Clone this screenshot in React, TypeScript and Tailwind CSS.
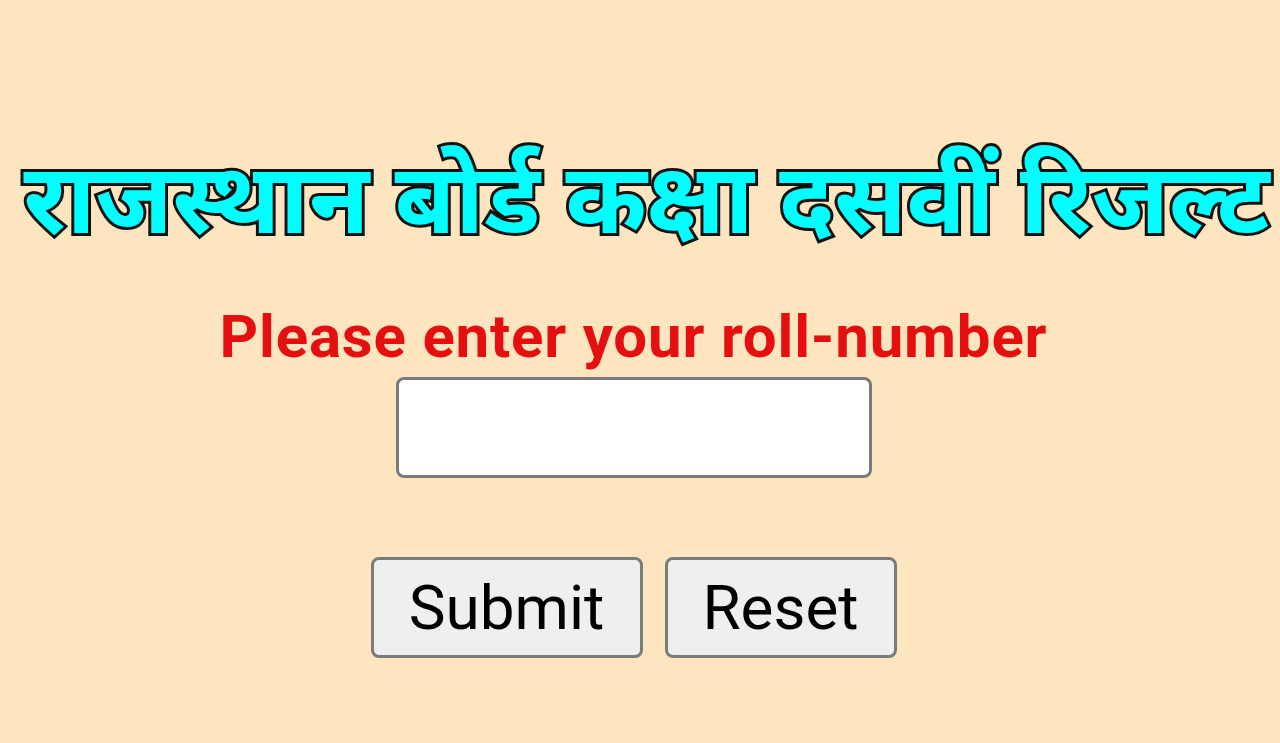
import React, { useState } from 'react';

export default function App() {
  const [roll, setRoll] = useState('');

  return (
    <div className="min-h-[743px] w-full bg-[#fde5bf] flex flex-col items-center pr-[13px] pt-[152px] overflow-hidden">
      {/* Title */}
      <h1
        className="ml-[26px] whitespace-nowrap text-[98px] leading-[115px] font-bold text-[#00ffff] [-webkit-text-stroke:6px_#111] [paint-order:stroke_fill]"
        style={{ fontFamily: '"Noto Sans Devanagari", "Lohit Devanagari", "Noto Sans", sans-serif' }}
      >
        राजस्थान बोर्ड कक्षा दसवीं रिजल्ट
      </h1>

      <p className="mt-[40px] text-[60px] leading-[60px] tracking-[0.8px] font-bold text-[#e60f0f] font-['Roboto',sans-serif]">
        Please enter your roll-number
      </p>

      <input
        type="text"
        value={roll}
        onChange={e => setRoll(e.target.value)}
        className="mt-[10px] w-[476px] h-[101px] bg-white border-[3px] border-[#7b7b7b] rounded-[8px] px-3 text-[40px] font-['Roboto',sans-serif] outline-none"
      />

      <div className="mt-[79px] flex gap-[22px] font-['Roboto',sans-serif]">
        <button className="w-[272px] h-[101px] bg-[#efefef] border-[3px] border-[#7b7b7b] rounded-[8px] text-[62px] text-black">
          Submit
        </button>
        <button onClick={() => setRoll('')} className="w-[232px] h-[101px] bg-[#efefef] border-[3px] border-[#7b7b7b] rounded-[8px] text-[62px] text-black">
          Reset
        </button>
      </div>
    </div>
  );
}
